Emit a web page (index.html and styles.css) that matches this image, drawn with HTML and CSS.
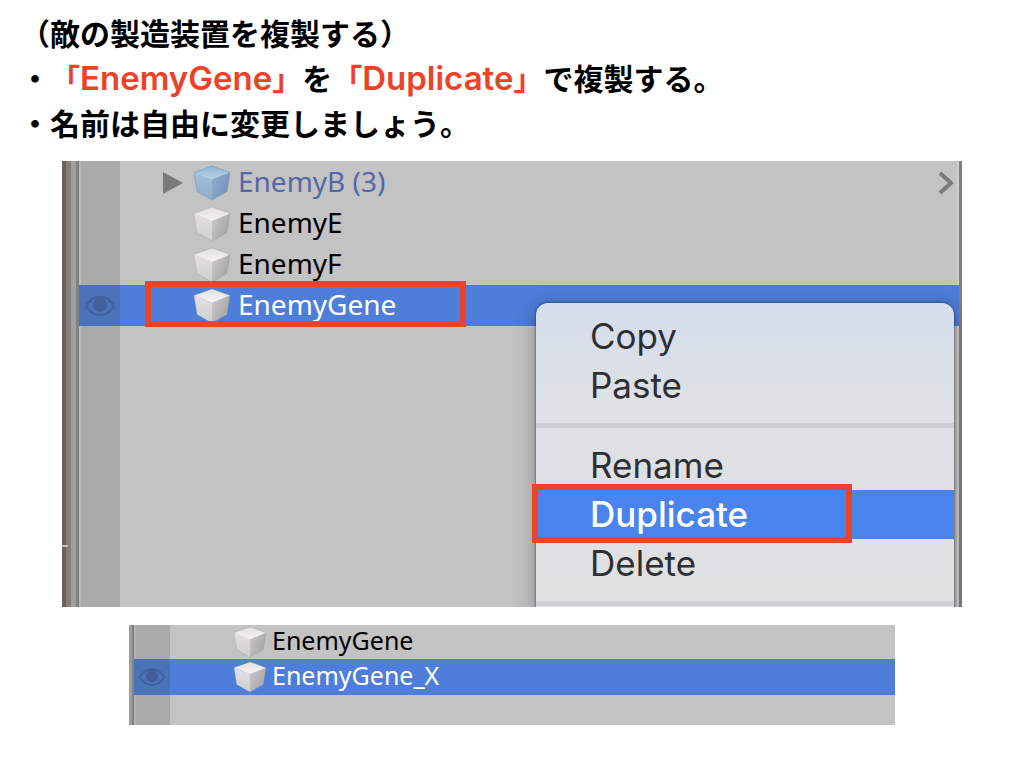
FILE: index.html
```
<!DOCTYPE html>
<html lang="ja">
<head>
<meta charset="utf-8">
<title>敵の製造装置を複製する</title>
<link rel="stylesheet" href="styles.css">
</head>
<body>
<svg class="defs" aria-hidden="true">
  <defs>
    <linearGradient id="top" x1="0" y1="0" x2="0" y2="1"><stop offset="0" stop-color="#e2e0e1"/><stop offset="1" stop-color="#f5f3f4"/></linearGradient>
    <linearGradient id="left" x1="0" y1="0" x2="0" y2="1"><stop offset="0" stop-color="#e4e1e2"/><stop offset="1" stop-color="#d0cecf"/></linearGradient>
    <linearGradient id="right" x1="0" y1="0" x2="1" y2="0.6"><stop offset="0" stop-color="#cbc9ca"/><stop offset="1" stop-color="#a5a4a5"/></linearGradient>
    <linearGradient id="btop" x1="0" y1="0" x2="0" y2="1"><stop offset="0" stop-color="#8fb2d2"/><stop offset="1" stop-color="#b7d2e8"/></linearGradient>
    <linearGradient id="bleft" x1="0" y1="0" x2="0" y2="1"><stop offset="0" stop-color="#a3c1de"/><stop offset="1" stop-color="#8fadcb"/></linearGradient>
    <linearGradient id="bright" x1="0" y1="0" x2="1" y2="0.6"><stop offset="0" stop-color="#8fb0d2"/><stop offset="1" stop-color="#7592b8"/></linearGradient>
    <symbol id="cube" viewBox="0 0 36 36">
      <path d="M0 7.500 18 15V35L3 26.500Z" fill="url(#left)"/>
      <path d="M36 7.500 18 15V35L33 26.500Z" fill="url(#right)"/>
      <path d="M0 7.500 18 1 36 7.500 18 15Z" fill="url(#top)"/>
      <path d="M0 7.500 18 1 36 7.500 33 26.500 18 35 3 26.500Z" fill="none" stroke="#8b8b8b" stroke-opacity=".35" stroke-width=".7"/>
    </symbol>
    <symbol id="cube-blue" viewBox="0 0 36 36">
      <path d="M0 7.500 18 14V35L3 26.500Z" fill="url(#bleft)"/>
      <path d="M36 7.500 18 14V35L33 26.500Z" fill="url(#bright)"/>
      <path d="M0 7.500 18 1 36 7.500 18 14Z" fill="url(#btop)"/>
      <path d="M0 7.500 18 1 36 7.500 33 26.500 18 35 3 26.500Z" fill="none" stroke="#5f7ea4" stroke-opacity=".5" stroke-width=".7"/>
    </symbol>
    <symbol id="eye" viewBox="0 0 32 22">
      <path d="M2 11C9-1 23-1 30 11C23 23 9 23 2 11Z" fill="none" stroke="#42619c" stroke-width="2.400"/>
      <circle cx="16" cy="10" r="7" fill="#42619c"/>
    </symbol>
  </defs>
</svg>
<main class="slide">
  <header class="notes">
    <p>（敵の製造装置を複製する）</p>
    <p>・<em>「<span class="latin">EnemyGene</span>」</em>を<em>「<span class="latin">Duplicate</span>」</em>で複製する。</p>
    <p>・名前は自由に変更しましょう。</p>
  </header>

  <section class="panel panel-main">
    <div class="edge"><span class="tick"></span></div>
    <ul class="list">
      <li class="row prefab"><span class="gutter"></span><span class="fold"><svg class="arrow" viewBox="0 0 20 22"><path d="M0 0 20 11 0 22Z"/></svg></span><svg class="cube"><use href="#cube-blue"/></svg><span class="name">EnemyB (3)</span><svg class="chevron" viewBox="0 0 16 24"><path d="M2 2 13 12 2 22"/></svg></li>
      <li class="row"><span class="gutter"></span><span class="fold"></span><svg class="cube"><use href="#cube"/></svg><span class="name">EnemyE</span></li>
      <li class="row"><span class="gutter"></span><span class="fold"></span><svg class="cube"><use href="#cube"/></svg><span class="name">EnemyF</span></li>
      <li class="row selected"><span class="gutter"><svg class="eye"><use href="#eye"/></svg></span><span class="fold"></span><svg class="cube"><use href="#cube"/></svg><span class="name">EnemyGene</span><span class="mark mark-row"></span></li>
    </ul>
    <div class="edge-right"></div>
    <div class="menu" role="menu">
      <button type="button" role="menuitem">Copy</button>
      <button type="button" role="menuitem">Paste</button>
      <hr>
      <button type="button" role="menuitem">Rename</button>
      <button type="button" role="menuitem" class="active">Duplicate<span class="mark mark-item"></span></button>
      <button type="button" role="menuitem">Delete</button>
      <hr>
    </div>
  </section>

  <section class="panel panel-small">
    <div class="edge"></div>
    <ul class="list">
      <li class="row"><span class="gutter"></span><span class="fold"></span><svg class="cube"><use href="#cube"/></svg><span class="name">EnemyGene</span></li>
      <li class="row selected"><span class="gutter"><svg class="eye"><use href="#eye"/></svg></span><span class="fold"></span><svg class="cube"><use href="#cube"/></svg><span class="name">EnemyGene_X</span></li>
    </ul>
  </section>
</main>
</body>
</html>
```
FILE: styles.css
```
* { box-sizing: border-box; }
body { margin: 0; background: #fff; color: #000; }
.defs { position: absolute; width: 0; height: 0; }
.slide { padding: 10px 0 40px; }

.notes { padding: 0 20px; margin-bottom: 16px; font: 700 30px/45px "Noto Sans CJK JP", sans-serif; text-spacing-trim: space-all; font-kerning: none; }
.notes p { margin: 0; }
.notes em { font-style: normal; color: #ec4228; }
.latin { font-family: Inter, "Noto Sans CJK JP", sans-serif; font-size: 33px; font-weight: 600; line-height: 1; font-kerning: auto; }

.panel { position: relative; display: flex; overflow: hidden; background: #c3c3c3; }
.panel-main { margin: 0 62px; min-height: 446px; }
.panel-small { margin: 18px 129px 0; min-height: 100px; }

.edge { width: 17px; background: linear-gradient(90deg, #6b635b 0 4px, #827f7b 4px 9px, #a0a0a0 9px 14px, #828282 14px 17px); }
.panel-small .edge { width: 5px; background: linear-gradient(90deg, #9e9e9e 0 3px, #828282 3px); }
.tick { display: block; width: 6px; height: 2px; margin-top: 384px; background: #c4c1bd; }
.edge-right { width: 5px; background: linear-gradient(90deg, #cecece 0 2px, #808080 2px); }

.list { flex: 1; margin: 0; padding: 1px 0 0; list-style: none; background: linear-gradient(90deg, #b9b9b9 0 2px, #aaa 2px 41px, #c3c3c3 41px); font: 28px/36px "Noto Sans", sans-serif; }
.panel-small .list { padding: 0; background: linear-gradient(90deg, #b4b4b4 0 2px, #aaa 2px 36px, #c3c3c3 36px); font-size: 25px; line-height: 30px; }
.row { position: relative; display: flex; align-items: center; height: 41px; }
.panel-small .row { height: 36px; }
.panel-small .row:first-child { height: 34px; }
.name { padding-bottom: 4px; }
.selected { background: #4e7eda; color: #fff; }
.panel-main .selected { margin-right: -2px; }
.gutter { display: flex; align-items: center; justify-content: center; align-self: stretch; width: 41px; }
.panel-small .gutter { width: 36px; }
.selected .gutter { background: #4b73b9; }
.eye { width: 32px; height: 22px; }
.panel-small .eye { width: 28px; height: 20px; }
.eye use { width: 100%; height: 100%; }
.fold { display: flex; justify-content: flex-end; width: 74px; padding-right: 11px; }
.panel-small .fold { width: 64px; }
.arrow { width: 20px; height: 22px; fill: #7a7a7a; }
.cube { width: 36px; height: 36px; margin-right: 8px; }
.panel-small .cube { width: 32px; height: 32px; margin-right: 6px; }
.prefab { color: #5468a6; }
.chevron { width: 16px; height: 24px; margin: 0 3px 0 auto; fill: none; stroke: #7c7c7c; stroke-width: 4; }

.mark { position: absolute; border: 6px solid #ec4228; pointer-events: none; }
.mark-row { left: 66px; top: -4px; width: 321px; height: 46px; }
.mark-item { left: -4px; top: -6px; width: 320px; height: 59px; }

.menu { position: absolute; right: 8px; top: 142px; width: 418px; padding: 9px 0; border-radius: 12px 12px 0 0; background: linear-gradient(#d5deed, #dde0e5 90px, #dfe0e3 150px, #e1e1e2); box-shadow: 0 0 3px rgba(0, 0, 0, .6), 0 4px 22px rgba(0, 0, 0, .3); }
.menu button { position: relative; display: block; width: 100%; height: 49px; padding: 0 54px; border: 0; background: none; color: #2d2f33; font: 400 35px/47px Inter, sans-serif; text-align: left; }
.menu .active { background: #4983ee; color: #fff; font-weight: 500; }
.menu hr { height: 5px; margin: 13px 0; border: 0; background: #cecfd2; }
```
